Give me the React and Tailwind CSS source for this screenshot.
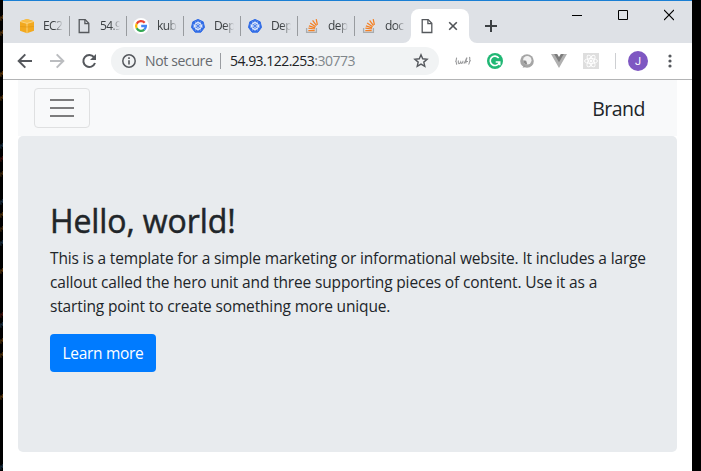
import React from "react";

function Cube() {
  return (
    <svg width="16" height="16" viewBox="0 0 16 16">
      <path d="M1 3.2 8 1l7 2.2v9.6L8 15.2 1 12.8z" fill="#f2a91f" />
      <path d="M1 3.2 8 1l7 2.2L8 5.4z" fill="#f9be45" />
      <path d="M8 5.4v9.8M1 3.4l7 2 7-2" stroke="#fbdc96" strokeWidth=".8" fill="none" />
      <path d="M1.2 8.5 8 9l6.8-.5" stroke="#dd9413" strokeWidth=".6" fill="none" />
    </svg>
  );
}

function Page() {
  return (
    <svg width="16" height="16" viewBox="0 0 16 16" fill="none" stroke="#55585c" strokeWidth="1.3">
      <path d="M3.2 1.6h6l3.6 3.7v9.2H3.2z" />
      <path d="M8.9 1.8v3.8h3.8" />
    </svg>
  );
}

function Google() {
  return (
    <svg width="16" height="16" viewBox="0 0 16 16">
      <circle cx="8" cy="8" r="8" fill="#fff" />
      <g fill="none" strokeWidth="2.3">
        <path d="M11.7 4.7A4.9 4.9 0 0 0 3.7 5.7" stroke="#ea4335" />
        <path d="M3.7 5.7a4.9 4.9 0 0 0 0 4.6" stroke="#fbbc05" />
        <path d="M3.7 10.3a4.9 4.9 0 0 0 7.6 1.3" stroke="#34a853" />
        <path d="M11.3 11.6A4.9 4.9 0 0 0 12.9 8H8.2" stroke="#4285f4" />
      </g>
    </svg>
  );
}

function Kube() {
  return (
    <svg width="16" height="16" viewBox="0 0 16 16">
      <path d="M8 1.4 13.2 3.8 14.5 9.4 10.9 14.2H5.1L1.5 9.4 2.8 3.8z" fill="#326de6" stroke="#326de6" strokeLinejoin="round" />
      <g fill="none" stroke="#fff">
        <circle cx="8" cy="8" r="3.4" strokeWidth="1" />
        <path d="M8 2.8v10.2M3 6.9l10 2.2M13 6.9 3 9.1M5.5 12.4l5-8.8M10.5 12.4l-5-8.8" strokeWidth=".6" />
      </g>
      <circle cx="8" cy="8" r="1.1" fill="#326de6" />
    </svg>
  );
}

function Stack() {
  return (
    <svg width="16" height="16" viewBox="0 0 16 16" fill="none">
      <path d="M2.6 10v4.4h9.8V10" stroke="#a9acae" strokeWidth="1.3" />
      <path d="M4.3 12.5h6.4M4.4 10.2l6.4.8M4.9 7.8l6.2 2M6.2 5l5.4 3.7M8.6 2.4l3.9 5.3M12.2 1.2l1.2 5.6" stroke="#f48024" strokeWidth="1.25" />
    </svg>
  );
}

const tabs = [
  { icon: Cube, label: "EC2" },
  { icon: Page, label: "54.9" },
  { icon: Google, label: "kub" },
  { icon: Kube, label: "Dep" },
  { icon: Kube, label: "Dep" },
  { icon: Stack, label: "dep" },
  { icon: Stack, label: "doc" },
];

function TabStrip() {
  return (
    <div className="flex h-[42px] bg-[#dee1e6] pl-[10px]">
      {tabs.map(({ icon: Icon, label }, i) => (
        <div key={i} className={"flex h-[34px] mt-2 shrink-0 items-center pl-[6px] " + (i === 6 ? "w-[56px]" : "w-[57px]")}>
          <Icon />
          <div className="ml-2 w-[22px] whitespace-nowrap text-[12px] leading-4 tracking-[-0.6px] text-[#3c4043] [mask-image:linear-gradient(to_right,#000_50%,transparent_92%)]">
            {label}
          </div>
          {i < 6 && <div className="ml-auto h-5 w-px bg-[#989b9f]" />}
        </div>
      ))}
      <svg className="mt-[34px] -ml-2 shrink-0" width="8" height="8">
        <path d="M8 0v8H0a8 8 0 0 0 8-8" fill="#fff" />
      </svg>
      <div className="mt-2 flex h-[34px] w-[58px] shrink-0 items-center rounded-t-lg bg-white pl-2">
        <Page />
        <svg className="ml-[13px]" width="10" height="10" viewBox="0 0 10 10">
          <path d="m1.2 1.2 7.6 7.6M8.8 1.2 1.2 8.8" stroke="#505357" strokeWidth="1.6" />
        </svg>
      </div>
      <svg className="mt-[34px] shrink-0" width="8" height="8">
        <path d="M0 0v8h8a8 8 0 0 1-8-8" fill="#fff" />
      </svg>
      <svg className="ml-2 mt-[19px] shrink-0" width="12" height="12">
        <path d="M6 0v12M0 6h12" stroke="#3c4043" strokeWidth="2" />
      </svg>
      <div className="ml-auto mr-[18px] mt-2 flex gap-9 text-black">
        <svg width="10" height="12" fill="none" stroke="currentColor"><path d="M0 6.5h10" /></svg>
        <svg width="10" height="12" fill="none" stroke="currentColor"><path d="M.5 1.5h9v9h-9z" /></svg>
        <svg width="10" height="12" fill="none" stroke="currentColor"><path d="m0 1 10 10M10 1 0 11" strokeWidth="1.1" /></svg>
      </div>
    </div>
  );
}

function Toolbar() {
  return (
    <div className="flex h-9 items-center bg-white pl-[14px]">
      <svg width="16" height="16" viewBox="0 0 16 16" fill="none" stroke="#55585d" strokeWidth="2">
        <path d="M15 8H2M8.3 1.4 1.7 8l6.6 6.6" />
      </svg>
      <svg className="ml-4" width="16" height="16" viewBox="0 0 16 16" fill="none" stroke="#bbbdc0" strokeWidth="2">
        <path d="M1 8h13M7.7 1.4 14.3 8l-6.6 6.6" />
      </svg>
      <svg className="ml-4" width="16" height="16" viewBox="0 0 16 16">
        <path d="M13 4.2A6 6 0 1 0 14 10" fill="none" stroke="#55585d" strokeWidth="2" />
        <path d="M15 1v6H9z" fill="#55585d" />
      </svg>
      <div className="ml-[14px] flex h-7 w-[328px] items-center rounded-full bg-[#f1f3f4] pl-[11px] text-[14px] leading-5">
        <svg width="14" height="14" viewBox="0 0 14 14" fill="none" stroke="#55585d">
          <circle cx="7" cy="7" r="6.2" strokeWidth="1.5" />
          <path d="M7 6.2v4.2M7 3.3v1.6" strokeWidth="1.6" />
        </svg>
        <span className="ml-[9px] w-[75px] whitespace-nowrap tracking-[-0.35px] text-[#66696e]">Not secure</span>
        <span className="h-4 w-px bg-[#9a9da1]" />
        <span className="ml-[9px] whitespace-nowrap tracking-[-0.52px] text-[#202124]">
          54.93.122.253<span className="text-[#80868b]">:30773</span>
        </span>
        <svg className="ml-auto mr-[10px]" width="16" height="16" viewBox="0 0 16 16" fill="none" stroke="#55585d" strokeWidth="1.4">
          <path d="m8 1.8 1.7 4 4.4.4-3.3 2.9 1 4.3L8 11.1l-3.8 2.3 1-4.3-3.3-2.9 4.4-.4z" />
        </svg>
      </div>
      <svg className="ml-4" width="16" height="16" viewBox="0 0 16 16" fill="none" stroke="#98999b" strokeWidth="1.1">
        <path d="M2 4.8C.6 5.4 2 7.2.7 8.3c1.3.6-.1 2.5 1.4 3.3M14 4.2c1.8 0-.2 2.5 1.3 3.6-1.6.8-.4 3-1.8 3.6M3.5 7.5c-.8 3.2.9 4.3 2.2 1.5.4 2.4 2.3 1.5 2.3-1.2M8.8 10.6c1.4-1.1 1.8-4.3 3.2-6-1.1 2.8-.9 4.2-1.2 5.8M10 8.5h3" />
      </svg>
      <svg className="ml-4" width="16" height="16" viewBox="0 0 16 16" fill="none">
        <circle cx="8" cy="8" r="8" fill="#20b774" />
        <path d="M11.7 5A4.7 4.7 0 1 0 12.3 9.5M8.7 9h4v3.2" stroke="#fff" strokeWidth="1.6" />
      </svg>
      <svg className="ml-4" width="16" height="16" viewBox="0 0 16 16">
        <circle cx="8" cy="8" r="6.8" fill="#a5a5a5" />
        <circle cx="8.3" cy="7.2" r="4.2" fill="#f2f2f2" />
        <path d="M8.3 11.4A4.2 4.2 0 0 1 4.2 7.2l3 .5z" fill="#8b8b8b" />
        <path d="m5.2 12.2-1.6 2.5 3.2-1" fill="#999" />
      </svg>
      <svg className="ml-4" width="16" height="16" viewBox="0 0 16 16">
        <path d="M0 1h4l4 6.8L12 1h4L8 14.9z" fill="#b0b0b0" />
        <path d="M3.2 1h3L8 4.1 9.8 1h3L8 9.3z" fill="#7c7c7c" />
      </svg>
      <svg className="ml-4" width="16" height="16" viewBox="0 0 16 16" fill="none" stroke="#fff" strokeWidth=".9">
        <path d="M0 0h16v16H0z" fill="#dedede" stroke="none" />
        <ellipse cx="8" cy="8" rx="6.5" ry="2.5" />
        <ellipse cx="8" cy="8" rx="6.5" ry="2.5" transform="rotate(60 8 8)" />
        <ellipse cx="8" cy="8" rx="6.5" ry="2.5" transform="rotate(120 8 8)" />
        <circle cx="8" cy="8" r="1" fill="#fff" />
      </svg>
      <div className="ml-4 h-4 w-px bg-[#cdcfd2]" />
      <div className="ml-3 flex size-5 items-center justify-center rounded-full bg-[#7e57c2] font-[Roboto] text-[11px] leading-none text-white">J</div>
      <svg className="ml-5" width="4" height="14" fill="#55585d">
        <circle cx="2" cy="2" r="1.6" /><circle cx="2" cy="7" r="1.6" /><circle cx="2" cy="12" r="1.6" />
      </svg>
    </div>
  );
}

const specks = [
  [17, "#7a4a12"], [32, "#7a4a12"], [73, "#8a5210"], [97, "#6f430f"], [145, "#24405a"], [158, "#5a1710"],
  [173, "#5d3a12"], [201, "#24405a"], [214, "#6f430f"], [228, "#5d3a12"], [242, "#24405a"], [270, "#7a4a12"],
  [314, "#5a1710"], [324, "#24405a"], [340, "#6f430f"], [354, "#6f430f"], [396, "#7a4a12"], [466, "#24405a"],
];

function Terminal() {
  return (
    <svg width="3" height="471" className="shrink-0">
      {specks.map(([y, color]) => (
        <path key={y} d={`M0 ${y}h2v1h-2v2h2M2.5 ${y - 2}v4`} stroke={color} fill="none" strokeWidth=".6" />
      ))}
    </svg>
  );
}

export default function App() {
  return (
    <div className="flex h-[471px] w-[701px] overflow-hidden bg-black font-['Open_Sans','Noto_Sans',sans-serif]">
      <Terminal />
      <div className="w-[689px] bg-white">
        <div className="h-px bg-[#1a7fd4]" />
        <TabStrip />
        <Toolbar />
        <div className="h-px bg-[#b3b4b5]" />
        <main className="mx-[15px] text-[#212529]">
          <nav className="flex h-14 items-center justify-between bg-[#f8f9fa] pl-4 pr-8">
            <button className="flex h-10 w-14 flex-col items-center justify-center gap-[6px] rounded border border-[#dfe0e1]">
              <span className="h-[2px] w-6 bg-[#7c7c7d]" />
              <span className="h-[2px] w-6 bg-[#7c7c7d]" />
              <span className="h-[2px] w-6 bg-[#7c7c7d]" />
            </button>
            <span className="pt-[2px] text-[19.5px] leading-[30px] tracking-[-0.5px]">Brand</span>
          </nav>
          <section className="h-[316px] rounded-[5px] bg-[#e8ebee] px-8 pt-[66px]">
            <h1 className="mb-[6px] whitespace-nowrap text-[32px] font-medium leading-[38px] tracking-[-0.1px] [-webkit-text-stroke:0.5px_#212529]">Hello, world!</h1>
            <p className="mb-4 whitespace-nowrap text-[15.5px] leading-6 tracking-[-0.15px]">
              This is a template for a simple marketing or informational website. It includes a large<br />
              callout called the hero unit and three supporting pieces of content. Use it as a<br />
              starting point to create something more unique.
            </p>
            <button className="h-[38px] w-[106px] whitespace-nowrap rounded bg-[#007bff] text-[15.5px] leading-6 tracking-[-0.3px] text-white">Learn more</button>
          </section>
        </main>
      </div>
    </div>
  );
}
